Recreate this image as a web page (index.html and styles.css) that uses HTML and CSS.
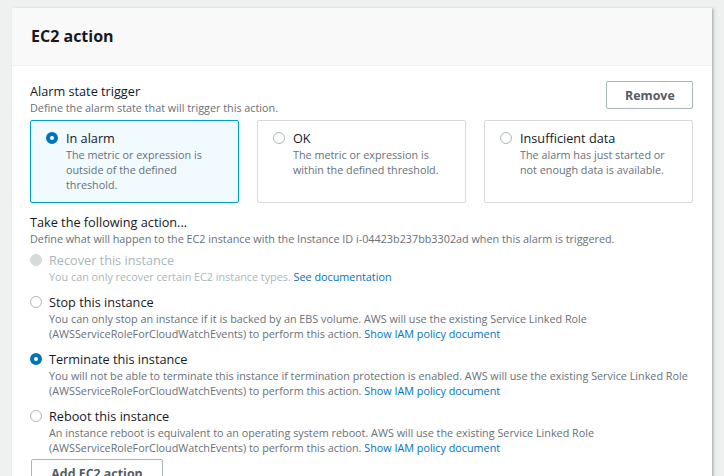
FILE: index.html
```html
<!DOCTYPE html>
<html>
<head>
<meta charset="utf-8">
<link rel="stylesheet" href="styles.css">
</head>
<body>
<div class="page">
  <section class="card">
    <header class="card-header"><h2>EC2 action</h2></header>
    <div class="card-body">
      <div class="trigger-head">
        <div>
          <div class="field-label">Alarm state trigger</div>
          <div class="field-desc">Define the alarm state that will trigger this action.</div>
        </div>
        <button class="btn">Remove</button>
      </div>
      <div class="tiles">
        <div class="tile selected">
          <span class="radio checked"></span>
          <div>
            <div class="tile-label">In alarm</div>
            <div class="tile-desc">The metric or expression is outside of the defined threshold.</div>
          </div>
        </div>
        <div class="tile">
          <span class="radio"></span>
          <div>
            <div class="tile-label">OK</div>
            <div class="tile-desc">The metric or expression is within the defined threshold.</div>
          </div>
        </div>
        <div class="tile">
          <span class="radio"></span>
          <div>
            <div class="tile-label">Insufficient data</div>
            <div class="tile-desc">The alarm has just started or not enough data is available.</div>
          </div>
        </div>
      </div>

      <div class="field-label action-label">Take the following action...</div>
      <div class="field-desc">Define what will happen to the EC2 instance with the Instance ID i-04423b237bb3302ad when this alarm is triggered.</div>

      <div class="options">
        <div class="option disabled">
          <span class="radio"></span>
          <div>
            <div class="opt-label">Recover this instance</div>
            <div class="opt-desc">You can only recover certain EC2 instance types. <a class="link">See documentation</a></div>
          </div>
        </div>
        <div class="option">
          <span class="radio"></span>
          <div>
            <div class="opt-label">Stop this instance</div>
            <div class="opt-desc">You can only stop an instance if it is backed by an EBS volume. AWS will use the existing Service Linked Role<br>(AWSServiceRoleForCloudWatchEvents) to perform this action. <a class="link">Show IAM policy document</a></div>
          </div>
        </div>
        <div class="option">
          <span class="radio checked"></span>
          <div>
            <div class="opt-label">Terminate this instance</div>
            <div class="opt-desc">You will not be able to terminate this instance if termination protection is enabled. AWS will use the existing Service Linked Role<br>(AWSServiceRoleForCloudWatchEvents) to perform this action. <a class="link">Show IAM policy document</a></div>
          </div>
        </div>
        <div class="option">
          <span class="radio"></span>
          <div>
            <div class="opt-label">Reboot this instance</div>
            <div class="opt-desc">An instance reboot is equivalent to an operating system reboot. AWS will use the existing Service Linked Role<br>(AWSServiceRoleForCloudWatchEvents) to perform this action. <a class="link">Show IAM policy document</a></div>
          </div>
        </div>
      </div>
      <button class="btn add-btn">Add EC2 action</button>
    </div>
  </section>
</div>
</body>
</html>
```

FILE: styles.css
```css
* { box-sizing: border-box; }
html, body { margin: 0; padding: 0; }
body {
  background: #eff0f0;
  font-family: "Open Sans", "Noto Sans", sans-serif;
  color: #16191f;
  width: 724px;
  height: 476px;
  overflow: hidden;
}
.page {
  padding: 8px 12px 0 12px;
}
.card {
  background: #fff;
  width: 700px;
  box-shadow: 1px 1px 2px rgba(0,28,36,0.25), 3px 0 3px rgba(0,28,36,0.08);
}
.card-header {
  background: #f9f9f9;
  height: 58px;
  padding: 0 19px;
  display: flex;
  align-items: center;
  border-bottom: 1px solid #f0f0f0;
}
.card-header h2 {
  margin: 0;
  font-size: 16px;
  font-weight: 700;
  line-height: 22px;
  padding-bottom: 1px;
  color: #16191f;
}
.card-body {
  padding: 16px 19px 0 18px;
}
.trigger-head {
  display: flex;
  justify-content: space-between;
  align-items: flex-start;
}
.field-label {
  font-size: 12.7px;
  line-height: 18px;
  color: #16191f;
}
.field-desc {
  font-size: 10.8px;
  line-height: 15px;
  color: #687078;
}
.btn {
  font-family: inherit;
  font-size: 12.4px;
  font-weight: 700;
  color: #545b64;
  background: #fff;
  border: 1px solid #aab7b8;
  border-radius: 2px;
  height: 28px;
  padding: 0 18px;
  margin-top: -1px;
}
.trigger-head .btn { width: 87px; }
.tiles {
  display: grid;
  grid-template-columns: repeat(3, 1fr);
  gap: 18px;
  margin-top: 5px;
}
.tile {
  border: 1px solid #d5dbdb;
  border-radius: 2px;
  padding: 8px 12px 10px 15px;
  display: flex;
  gap: 8px;
  min-height: 83px;
}
.tile.selected {
  background: #f1faff;
  border-color: #00a1c9;
}
.tile .radio { margin-top: 3px; }
.tile-label {
  font-size: 12.7px;
  line-height: 18px;
}
.tile-desc {
  font-size: 10.8px;
  line-height: 15px;
  color: #687078;
}
.radio {
  flex: none;
  width: 12px;
  height: 12px;
  border-radius: 50%;
  border: 1px solid #aab7b8;
  background: #fff;
  display: inline-block;
}
.radio.checked {
  border: 4px solid #0073bb;
}
.action-label {
  margin-top: 10px;
}
.options {
  margin-top: 5px;
}
.option {
  display: flex;
  gap: 7px;
  margin-bottom: 9px;
}
.option .radio { margin-top: 3px; }
.opt-label {
  font-size: 12.7px;
  line-height: 18px;
}
.opt-desc {
  font-size: 10.8px;
  line-height: 15px;
  color: #687078;
}
.link {
  color: #0073bb;
  text-decoration: none;
}
.option.disabled .opt-label,
.option.disabled .opt-desc { color: #aab7b8; }
.option.disabled .radio {
  background: #d5dbdb;
  border-color: #d5dbdb;
}
.add-btn {
  display: block;
  margin-top: -5px;
  margin-left: 1px;
  height: 28px;
  width: 132px;
  padding: 0;
}
```
